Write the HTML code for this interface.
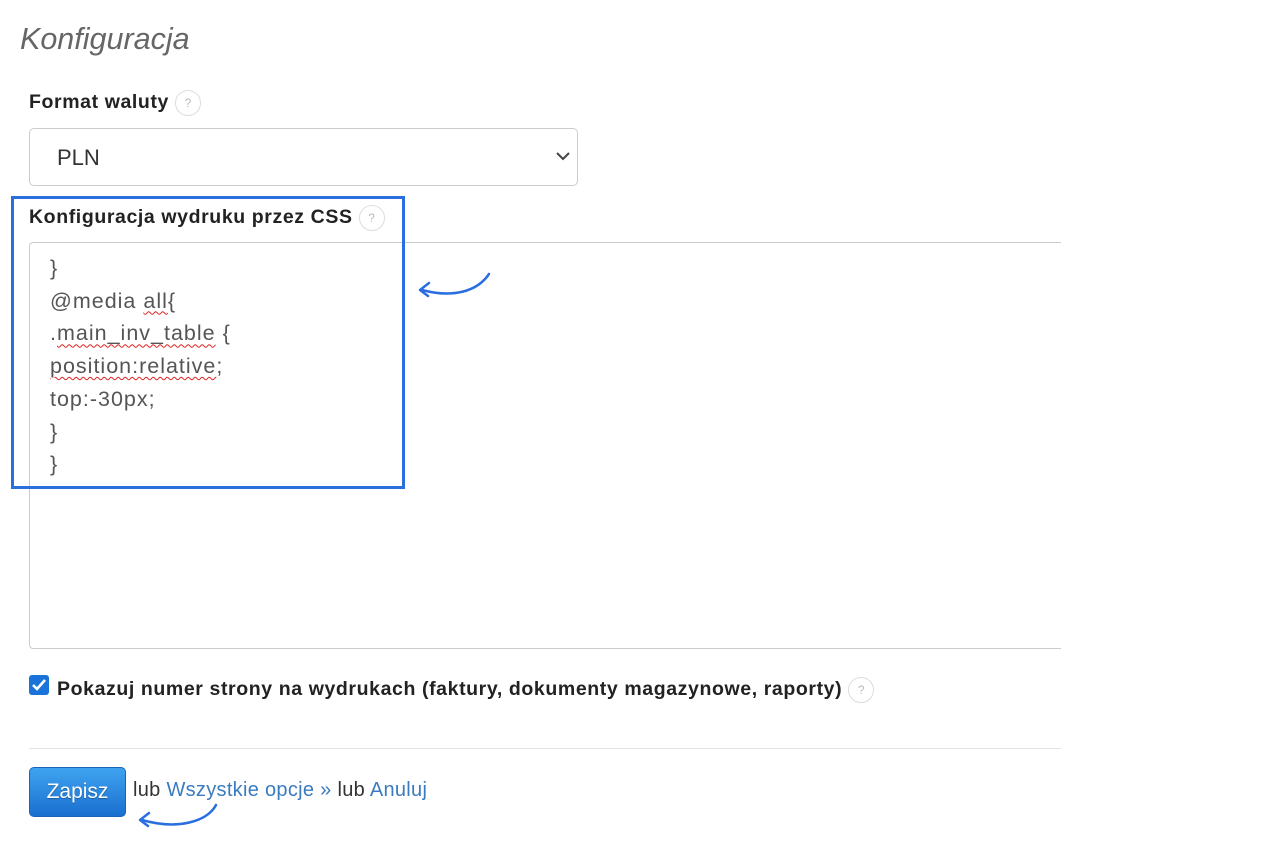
<!DOCTYPE html>
<html><head><meta charset="utf-8"><style>
body{margin:0;width:1277px;height:846px;background:#fff;font-family:"Liberation Sans",Arial,sans-serif;position:relative;overflow:hidden}
.a{position:absolute}
.h{left:20px;top:22px;font-size:30.5px;font-style:italic;color:#666}
.lbl{font-size:19.5px;font-weight:bold;color:#222;letter-spacing:0.6px;white-space:nowrap}
.q{display:inline-block;width:24px;height:24px;border:1px solid #ddd;border-radius:50%;color:#bbb;font-size:12px;text-align:center;line-height:24px;font-weight:normal;vertical-align:middle;margin-left:6px;letter-spacing:0}
.sel{left:29px;top:128px;width:549px;height:58px;border:1px solid #ccc;border-radius:5px;box-sizing:border-box}
.ta{left:29px;top:242px;width:1032px;height:407px;border:1px solid #ccc;border-right:none;border-radius:4px 0 0 4px;box-sizing:border-box}
.code{left:50px;top:252px;font-size:21.5px;line-height:32.7px;color:#555;letter-spacing:1px}
.sq{text-decoration:underline wavy #d22;text-decoration-thickness:1px;text-underline-offset:3px}
.box{left:11px;top:196px;width:394px;height:293px;border:3px solid #2a6ee0;box-sizing:border-box}
a{color:#3a7bbf;text-decoration:none}
</style></head><body>
<div class="a h">Konfiguracja</div>
<div class="a lbl" style="left:29px;top:90px">Format waluty<span class="q">?</span></div>
<div class="a sel"><span class="a" style="left:27px;top:16px;font-size:22px;color:#333">PLN</span>
<svg class="a" style="left:526px;top:22px" width="14" height="10"><path d="M1 2 L7 8 L13 2" fill="none" stroke="#444" stroke-width="2"/></svg></div>
<div class="a lbl" style="left:29px;top:205px">Konfiguracja wydruku przez CSS<span class="q">?</span></div>
<div class="a ta"></div>
<div class="a code">}<br>@media <span class="sq">all</span>{<br>.<span class="sq">main_inv_table</span> {<br><span class="sq">position:relative</span>;<br>top:-30px;<br>}<br>}</div>
<div class="a box"></div>
<svg class="a" style="left:412px;top:268px" width="85" height="35"><path d="M77 6 C65 24 40 30 10 22" fill="none" stroke="#2a6ee0" stroke-width="2.5" stroke-linecap="round"/><path d="M17 15 L8 22 L16 28" fill="none" stroke="#2a6ee0" stroke-width="2.5" stroke-linecap="round" stroke-linejoin="round"/></svg>
<div class="a" style="left:29px;top:675px;width:20px;height:20px;background:#1a73d9;border-radius:3px"><svg width="20" height="20"><path d="M4 10 L8 14 L16 5" fill="none" stroke="#fff" stroke-width="2.6"/></svg></div>
<div class="a lbl" style="left:57px;top:677px;color:#222">Pokazuj numer strony na wydrukach (faktury, dokumenty magazynowe, raporty)<span class="q">?</span></div>
<div class="a" style="left:29px;top:748px;width:1032px;height:1px;background:#e2e2e2"></div>
<div class="a" style="left:29px;top:767px;width:97px;height:50px;border-radius:5px;background:linear-gradient(#3fa3ef,#1a6fd0);border:1px solid #1a63b8;box-sizing:border-box;color:#fff;font-size:21px;text-align:center;line-height:48px;text-shadow:0 1px 1px rgba(0,0,0,.3)">Zapisz</div>
<div class="a" style="left:133px;top:779px;font-size:20px;color:#333;letter-spacing:0.3px">lub <a>Wszystkie opcje »</a> lub <a>Anuluj</a></div>
<svg class="a" style="left:132px;top:800px" width="90" height="32"><path d="M84 5 C75 22 45 30 10 20" fill="none" stroke="#2a6ee0" stroke-width="2.5" stroke-linecap="round"/><path d="M17 13 L8 20 L16 26" fill="none" stroke="#2a6ee0" stroke-width="2.5" stroke-linecap="round" stroke-linejoin="round"/></svg>
</body></html>
